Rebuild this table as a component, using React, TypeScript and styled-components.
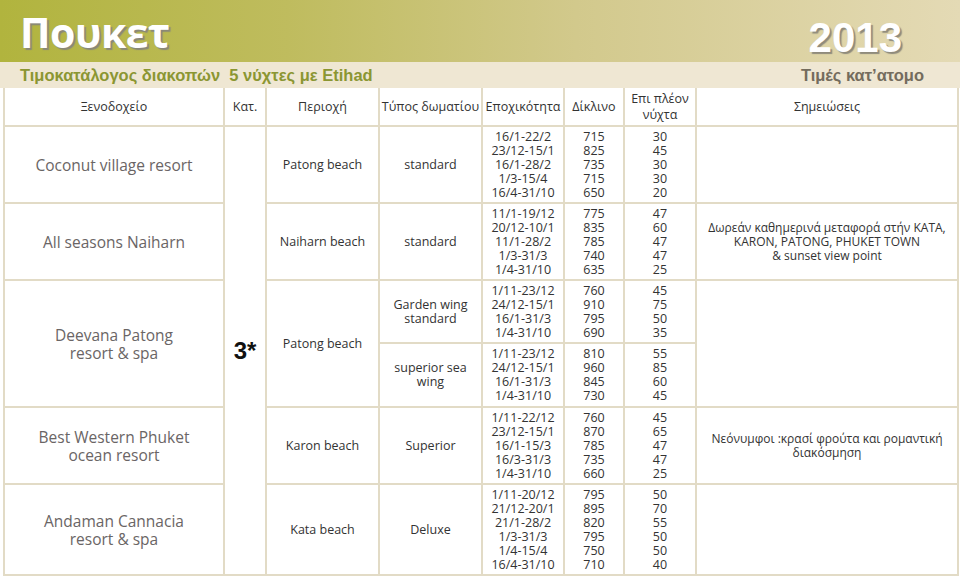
import React from "react";
import styled, { createGlobalStyle } from "styled-components";

const GlobalStyle = createGlobalStyle`
  html, body {
    margin: 0;
    padding: 0;
    background: #ffffff;
  }
  body {
    font-family: "Open Sans", "Noto Sans", "DejaVu Sans", sans-serif;
  }
`;

type Season = [string, string, string];

interface Room {
  type: string;
  seasons: Season[];
  height: number;
}

interface Hotel {
  name: string;
  area: string;
  note: string;
  rooms: Room[];
}

const hotels: Hotel[] = [
  {
    name: "Coconut village resort",
    area: "Patong beach",
    note: "",
    rooms: [
      {
        type: "standard",
        height: 77,
        seasons: [
          ["16/1-22/2", "715", "30"],
          ["23/12-15/1", "825", "45"],
          ["16/1-28/2", "735", "30"],
          ["1/3-15/4", "715", "30"],
          ["16/4-31/10", "650", "20"],
        ],
      },
    ],
  },
  {
    name: "All seasons Naiharn",
    area: "Naiharn beach",
    note: "Δωρεάν καθημερινά μεταφορά στήν ΚΑΤΑ,\nKARON, PATONG,  PHUKET TOWN\n& sunset view point",
    rooms: [
      {
        type: "standard",
        height: 77,
        seasons: [
          ["11/1-19/12", "775", "47"],
          ["20/12-10/1", "835", "60"],
          ["11/1-28/2", "785", "47"],
          ["1/3-31/3", "740", "47"],
          ["1/4-31/10", "635", "25"],
        ],
      },
    ],
  },
  {
    name: "Deevana Patong\nresort & spa",
    area: "Patong beach",
    note: "",
    rooms: [
      {
        type: "Garden wing\nstandard",
        height: 63,
        seasons: [
          ["1/11-23/12", "760", "45"],
          ["24/12-15/1", "910", "75"],
          ["16/1-31/3", "795", "50"],
          ["1/4-31/10", "690", "35"],
        ],
      },
      {
        type: "superior sea\nwing",
        height: 64,
        seasons: [
          ["1/11-23/12", "810", "55"],
          ["24/12-15/1", "960", "85"],
          ["16/1-31/3", "845", "60"],
          ["1/4-31/10", "730", "45"],
        ],
      },
    ],
  },
  {
    name: "Best Western Phuket\nocean resort",
    area: "Karon beach",
    note: "Νεόνυμφοι :κρασί φρούτα και ρομαντική\nδιακόσμηση",
    rooms: [
      {
        type: "Superior",
        height: 77,
        seasons: [
          ["1/11-22/12", "760", "45"],
          ["23/12-15/1", "870", "65"],
          ["16/1-15/3", "785", "47"],
          ["16/3-31/3", "735", "47"],
          ["1/4-31/10", "660", "25"],
        ],
      },
    ],
  },
  {
    name: "Andaman Cannacia\nresort & spa",
    area: "Kata beach",
    note: "",
    rooms: [
      {
        type: "Deluxe",
        height: 91,
        seasons: [
          ["1/11-20/12", "795", "50"],
          ["21/12-20/1", "895", "70"],
          ["21/1-28/2", "820", "55"],
          ["1/3-31/3", "795", "50"],
          ["1/4-15/4", "750", "50"],
          ["16/4-31/10", "710", "40"],
        ],
      },
    ],
  },
];

const line = "#e2dbc6";

const Page = styled.div`
  width: 960px;
  height: 578px;
  overflow: hidden;
  background: #ffffff;
`;

const Banner = styled.header`
  height: 62px;
  display: flex;
  justify-content: space-between;
  align-items: flex-start;
  padding: 0 58px 0 20px;
  box-sizing: border-box;
  background: linear-gradient(90deg, #b1b43e 0%, #bfbc5e 30%, #d2c98c 60%, #e4dab5 100%);
`;

const Title = styled.h1`
  margin: 0;
  padding-top: 4px;
  font-family: "Open Sans", "DejaVu Sans", sans-serif;
  font-size: 41px;
  font-weight: 700;
  letter-spacing: -0.5px;
  color: #ffffff;
  text-shadow: 2px 2px 1px #8a8878;
  line-height: 56px;
`;

const Year = styled.div`
  padding-top: 15px;
  font-family: "Liberation Sans", Arial, sans-serif;
  font-size: 42px;
  font-weight: 700;
  color: #ffffff;
  text-shadow: 2px 2px 1px #8f8b7c;
  line-height: 46px;
`;

const SubBar = styled.div`
  height: 26px;
  display: flex;
  justify-content: space-between;
  align-items: center;
  padding: 0 36px 0 20px;
  box-sizing: border-box;
  background: #efe7d3;
  font-family: "Liberation Sans", Arial, sans-serif;
  font-size: 16.5px;
  font-weight: 700;
`;

const SubTitle = styled.span<{ $tone: string }>`
  color: ${(p) => p.$tone};
`;

const Grid = styled.table`
  margin-left: 3px;
  width: 954px;
  border-collapse: collapse;
  table-layout: fixed;
  border: 2px solid ${line};
  border-top: none;
`;

const Row = styled.tr<{ $h: number }>`
  height: ${(p) => p.$h}px;
`;

const Head = styled.th`
  border: 2px solid ${line};
  border-top: none;
  font-weight: 400;
  font-size: 12.5px;
  line-height: 16px;
  color: #333333;
  text-align: center;
  vertical-align: middle;
  padding: 0;
`;

const Cell = styled.td`
  border: 2px solid ${line};
  text-align: center;
  vertical-align: middle;
  padding: 0;
  white-space: pre-line;
`;

const HotelCell = styled(Cell)`
  font-size: 15.5px;
  line-height: 18px;
  color: #6a6565;
`;

const CatCell = styled(Cell)`
  font-family: "Liberation Sans", Arial, sans-serif;
  font-size: 24px;
  font-weight: 700;
  color: #111111;
`;

const PlainCell = styled(Cell)`
  font-size: 12.5px;
  line-height: 14px;
  color: #333333;
`;

const ListCell = styled(Cell)`
  font-size: 12.5px;
  line-height: 14px;
  color: #333333;
`;

const NoteCell = styled(Cell)`
  font-size: 12px;
  line-height: 14px;
  color: #333333;
`;

const widths = [220, 42, 113, 103, 82, 60, 72, 262];

export default function App() {
  const rows: React.ReactNode[] = [];
  let first = true;
  hotels.forEach((h, hi) => {
    h.rooms.forEach((r, ri) => {
      const span = h.rooms.length;
      rows.push(
        <Row key={`${hi}-${ri}`} $h={r.height}>
          {ri === 0 && <HotelCell rowSpan={span}>{h.name}</HotelCell>}
          {first && <CatCell rowSpan={6}>3*</CatCell>}
          {ri === 0 && <PlainCell rowSpan={span}>{h.area}</PlainCell>}
          <PlainCell>{r.type}</PlainCell>
          <ListCell>{r.seasons.map((s) => s[0]).join("\n")}</ListCell>
          <ListCell>{r.seasons.map((s) => s[1]).join("\n")}</ListCell>
          <ListCell>{r.seasons.map((s) => s[2]).join("\n")}</ListCell>
          {ri === 0 && <NoteCell rowSpan={span}>{h.note}</NoteCell>}
        </Row>
      );
      first = false;
    });
  });

  return (
    <Page>
      <GlobalStyle />
      <Banner>
        <Title>Πουκετ</Title>
        <Year>2013</Year>
      </Banner>
      <SubBar>
        <SubTitle $tone="#8b9632">Τιμοκατάλογος διακοπών&nbsp; 5 νύχτες με Etihad</SubTitle>
        <SubTitle $tone="#746c5d">Τιμές κατ’ατομο</SubTitle>
      </SubBar>
      <Grid>
        <colgroup>
          {widths.map((w, i) => (
            <col key={i} style={{ width: w }} />
          ))}
        </colgroup>
        <thead>
          <Row $h={38}>
            <Head>Ξενοδοχείο</Head>
            <Head>Κατ.</Head>
            <Head>Περιοχή</Head>
            <Head>Τύπος δωματίου</Head>
            <Head>Εποχικότητα</Head>
            <Head>Δίκλινο</Head>
            <Head>
              Επι πλέον
              <br />
              νύχτα
            </Head>
            <Head>Σημειώσεις</Head>
          </Row>
        </thead>
        <tbody>{rows}</tbody>
      </Grid>
    </Page>
  );
}
